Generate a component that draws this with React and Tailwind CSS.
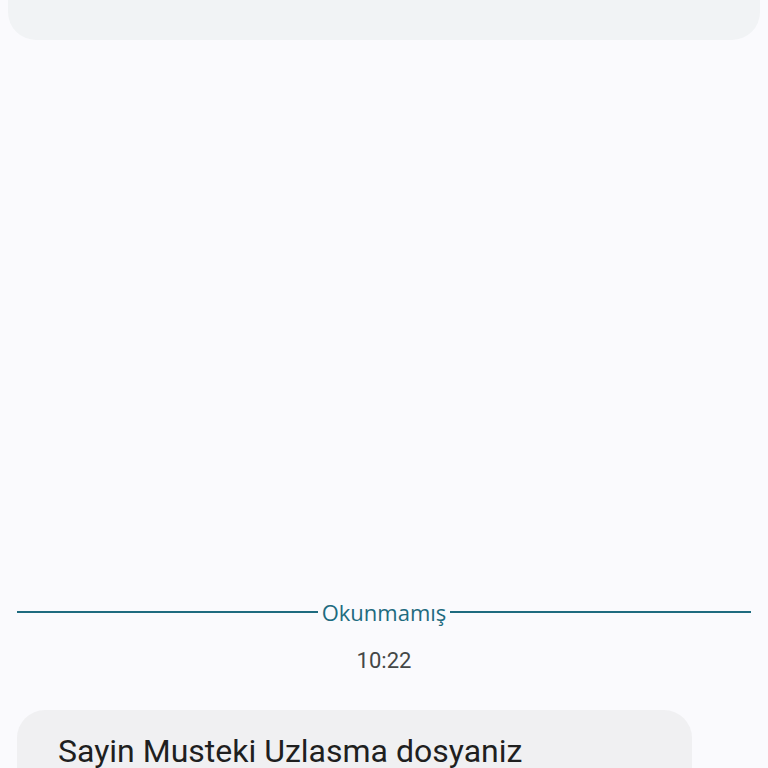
export default function App() {
  return (
    <div className="h-[768px] w-[768px] overflow-hidden bg-[#fafafd] flex flex-col" style={{ fontFamily: "Roboto, 'Noto Sans', sans-serif" }}>
      <div className="h-[40px] mx-2 shrink-0 rounded-b-[28px] bg-[#f1f3f5]" />
      <div className="mt-[560px] flex items-center px-[17px] h-[24px] shrink-0">
        <div className="flex-1 h-[2px] bg-[#1e6b7f]" />
        <span className="px-[4px] text-[22px] leading-[24px] text-[#1e6b7f]" style={{ fontFamily: "'Open Sans', sans-serif" }}>Okunmamış</span>
        <div className="flex-1 h-[2px] bg-[#1e6b7f]" />
      </div>
      <div className="mt-[23px] text-center text-[22px] leading-[28px] text-[#444746] shrink-0">10:22</div>
      <div className="mt-[35px] ml-[17px] w-[675px] h-[120px] shrink-0 rounded-[28px] bg-[#f0f0f2] pl-[41px] pt-[21px]">
        <p className="text-[32px] leading-[40px] text-[#1f1f1f]">Sayin Musteki Uzlasma dosyaniz</p>
      </div>
    </div>
  );
}
